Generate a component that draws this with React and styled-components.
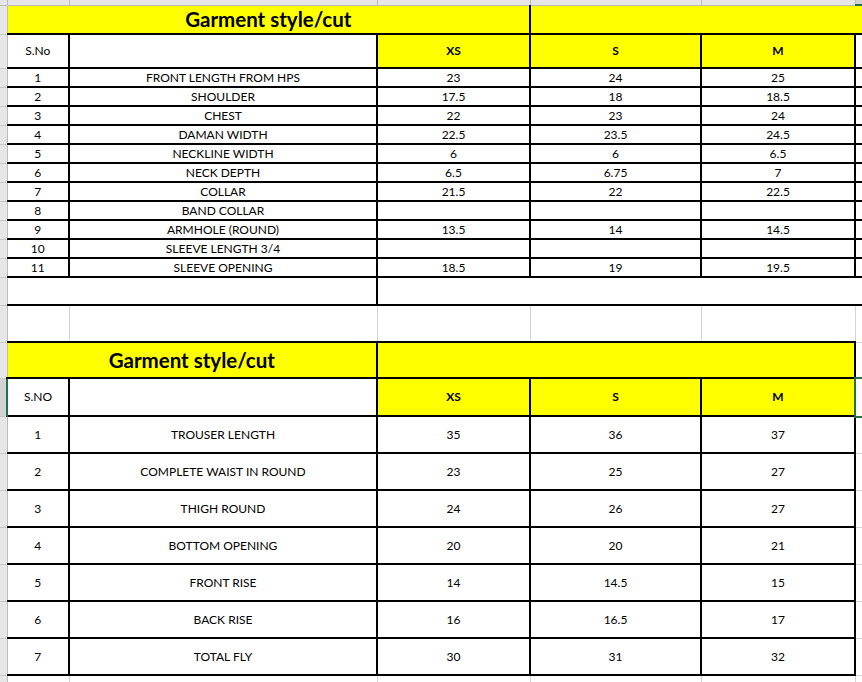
import React from 'react';
import styled, { createGlobalStyle } from 'styled-components';

const GlobalStyle = createGlobalStyle`
  html, body {
    margin: 0;
    padding: 0;
    background: #fff;
    overflow: hidden;
  }
  body {
    font-family: Lato, "Liberation Sans", sans-serif;
    color: #000;
  }
`;

const YELLOW = '#ffff00';
const GRID = '#d4d4d4';
const GREEN = '#217346';

const Sheet = styled.table`
  width: 862px;
  table-layout: fixed;
  border-collapse: collapse;
  border-spacing: 0;
`;

const Row = styled.tr`
  height: ${p => p.$h}px;
`;

const ColHead = styled.th`
  padding: 0;
  background: #e6e6e6;
  border-right: 1px solid #bcbcbc;
  border-bottom: 1px solid #bcbcbc;
`;

const SelectedColHead = styled(ColHead)`
  background: #d3d3d3;
  border-bottom: 2px solid ${GREEN};
`;

const RowHead = styled.th`
  padding: 0;
  background: #e6e6e6;
  border-right: 1px solid #bcbcbc;
  border-bottom: 1px solid #c8c8c8;
`;

const SelectedRowHead = styled(RowHead)`
  background: #d3d3d3;
  border-right: 2px solid ${GREEN};
`;

const Cell = styled.td`
  padding: 0 2px;
  border: 2px solid #000;
  background: ${p => (p.$fill ? YELLOW : '#fff')};
  font-size: ${p => p.$size || 12}px;
  font-weight: ${p => (p.$bold ? 700 : 400)};
  text-align: center;
  vertical-align: middle;
  white-space: nowrap;
  overflow: hidden;
  line-height: 1;
`;

const FirstCell = styled(Cell)`
  border-left: none;
`;

const TailCell = styled(Cell)`
  border-right: none;
`;

const GridCell = styled.td`
  padding: 0;
  border: 1px solid ${GRID};
  background: #fff;
`;

const SelectedCell = styled(GridCell)`
  position: relative;

  &::after {
    content: '';
    position: absolute;
    left: -2px;
    top: -2px;
    right: -4px;
    bottom: -2px;
    border: 2px solid ${GREEN};
  }
`;

const Title = styled.span`
  font-size: 20.5px;
  font-weight: 700;
`;

const upper = [
  [1, 'FRONT LENGTH FROM HPS', '23', '24', '25'],
  [2, 'SHOULDER', '17.5', '18', '18.5'],
  [3, 'CHEST', '22', '23', '24'],
  [4, 'DAMAN WIDTH', '22.5', '23.5', '24.5'],
  [5, 'NECKLINE WIDTH', '6', '6', '6.5'],
  [6, 'NECK DEPTH', '6.5', '6.75', '7'],
  [7, 'COLLAR', '21.5', '22', '22.5'],
  [8, 'BAND COLLAR', '', '', ''],
  [9, 'ARMHOLE (ROUND)', '13.5', '14', '14.5'],
  [10, 'SLEEVE LENGTH 3/4', '', '', ''],
  [11, 'SLEEVE OPENING', '18.5', '19', '19.5'],
];

const lower = [
  [1, 'TROUSER LENGTH', '35', '36', '37'],
  [2, 'COMPLETE WAIST IN ROUND', '23', '25', '27'],
  [3, 'THIGH ROUND', '24', '26', '27'],
  [4, 'BOTTOM OPENING', '20', '20', '21'],
  [5, 'FRONT RISE', '14', '14.5', '15'],
  [6, 'BACK RISE', '16', '16.5', '17'],
  [7, 'TOTAL FLY', '30', '31', '32'],
];

const widths = [7, 62, 308, 153, 171, 154, 7];
const sizes = ['XS', 'S', 'M'];

const App = () => (
  <>
    <GlobalStyle />
    <Sheet>
      <colgroup>
        {widths.map((w, i) => (
          <col key={i} style={{ width: w }} />
        ))}
      </colgroup>
      <tbody>
        <Row $h={5}>
          <ColHead />
          <ColHead />
          <ColHead />
          <ColHead />
          <ColHead />
          <ColHead />
          <SelectedColHead />
        </Row>

        {/* upper table */}
        <Row $h={29}>
          <RowHead />
          <FirstCell colSpan={3} $fill style={{ borderTop: 'none' }}>
            <Title>Garment style/cut</Title>
          </FirstCell>
          <TailCell colSpan={3} $fill style={{ borderTop: 'none' }} />
        </Row>
        <Row $h={34}>
          <RowHead />
          <FirstCell>S.No</FirstCell>
          <Cell />
          {sizes.map(s => (
            <Cell key={s} $fill $bold $size={12}>{s}</Cell>
          ))}
          <TailCell />
        </Row>
        {upper.map(([n, name, xs, s, m]) => (
          <Row key={n} $h={19}>
            <RowHead />
            <FirstCell>{n}</FirstCell>
            <Cell>{name}</Cell>
            <Cell>{xs}</Cell>
            <Cell>{s}</Cell>
            <Cell>{m}</Cell>
            <TailCell />
          </Row>
        ))}
        <Row $h={28}>
          <RowHead />
          <FirstCell colSpan={2} />
          <TailCell colSpan={4} />
        </Row>

        {/* spacer */}
        <Row $h={37}>
          <RowHead />
          <GridCell style={{ borderLeft: 'none' }} />
          <GridCell />
          <GridCell />
          <GridCell />
          <GridCell />
          <GridCell />
        </Row>

        {/* lower table */}
        <Row $h={36}>
          <RowHead />
          <FirstCell colSpan={2} $fill>
            <Title>Garment style/cut</Title>
          </FirstCell>
          <Cell colSpan={3} $fill />
          <GridCell />
        </Row>
        <Row $h={38}>
          <SelectedRowHead />
          <FirstCell>S.NO</FirstCell>
          <Cell />
          {sizes.map(s => (
            <Cell key={s} $fill $bold $size={12}>{s}</Cell>
          ))}
          <SelectedCell />
        </Row>
        {lower.map(([n, name, xs, s, m]) => (
          <Row key={n} $h={37}>
            <RowHead />
            <FirstCell>{n}</FirstCell>
            <Cell>{name}</Cell>
            <Cell>{xs}</Cell>
            <Cell>{s}</Cell>
            <Cell>{m}</Cell>
            <GridCell />
          </Row>
        ))}
        <Row $h={20}>
          <RowHead />
          <GridCell style={{ borderLeft: 'none' }} />
          <GridCell />
          <GridCell />
          <GridCell />
          <GridCell />
          <GridCell />
        </Row>
      </tbody>
    </Sheet>
  </>
);

export default App;
